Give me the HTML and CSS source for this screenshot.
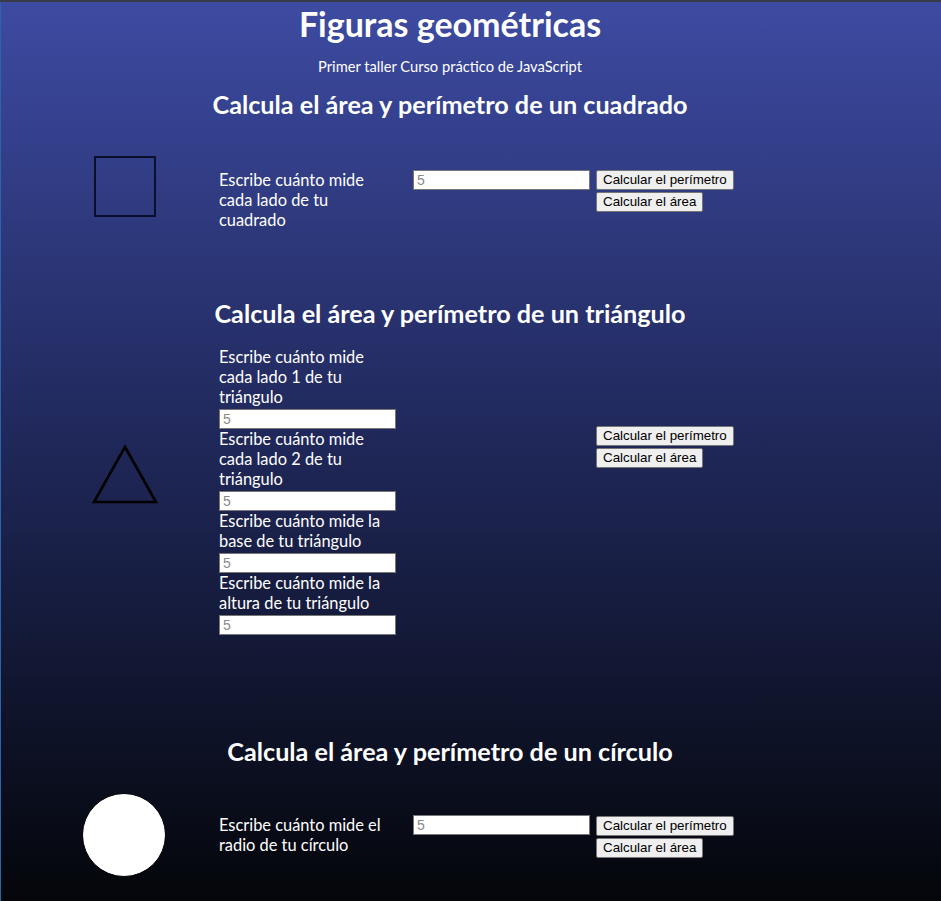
FILE: index.html
```html
<!DOCTYPE html>
<html lang="es">
<head>
<meta charset="utf-8">
<title>Figuras geométricas</title>
<link rel="stylesheet" href="styles.css">
</head>
<body>
<main class="page">
  <header class="hero">
    <h1 class="hero-title">Figuras geométricas</h1>
    <p class="hero-sub">Primer taller Curso práctico de JavaScript</p>
  </header>

  <section class="figure figure--square">
    <h2 class="figure-title">Calcula el área y perímetro de un cuadrado</h2>
    <div class="figure-row">
      <div class="shape-cell"><div class="shape-square"></div></div>
      <label class="field-label" for="inputCuadrado">Escribe cuánto mide cada lado de tu cuadrado</label>
      <input class="field-input" id="inputCuadrado" type="number" placeholder="5">
      <div class="actions">
        <button class="btn" type="button">Calcular el perímetro</button>
        <button class="btn" type="button">Calcular el área</button>
      </div>
    </div>
  </section>

  <section class="figure figure--triangle">
    <h2 class="figure-title">Calcula el área y perímetro de un triángulo</h2>
    <div class="figure-row">
      <div class="shape-cell">
        <svg class="shape-triangle" width="68" height="62" viewBox="0 0 68 62" aria-hidden="true">
          <polygon points="34,3 65,58 3,58" fill="none" stroke="#000" stroke-width="2.6" stroke-linejoin="miter"/>
        </svg>
      </div>
      <div class="field-stack">
        <label class="field-label" for="lado1">Escribe cuánto mide cada lado 1 de tu triángulo</label>
        <input class="field-input" id="lado1" type="number" placeholder="5">
        <label class="field-label" for="lado2">Escribe cuánto mide cada lado 2 de tu triángulo</label>
        <input class="field-input" id="lado2" type="number" placeholder="5">
        <label class="field-label" for="base">Escribe cuánto mide la base de tu triángulo</label>
        <input class="field-input" id="base" type="number" placeholder="5">
        <label class="field-label" for="altura">Escribe cuánto mide la altura de tu triángulo</label>
        <input class="field-input" id="altura" type="number" placeholder="5">
      </div>
      <div class="actions">
        <button class="btn" type="button">Calcular el perímetro</button>
        <button class="btn" type="button">Calcular el área</button>
      </div>
    </div>
  </section>

  <section class="figure figure--circle">
    <h2 class="figure-title">Calcula el área y perímetro de un círculo</h2>
    <div class="figure-row">
      <div class="shape-cell"><div class="shape-circle"></div></div>
      <label class="field-label" for="radio">Escribe cuánto mide el radio de tu círculo</label>
      <input class="field-input" id="radio" type="number" placeholder="5">
      <div class="actions">
        <button class="btn" type="button">Calcular el perímetro</button>
        <button class="btn" type="button">Calcular el área</button>
      </div>
    </div>
  </section>
</main>
</body>
</html>
```

FILE: styles.css
```css
html, body {
  margin: 0;
  padding: 0;
}

body {
  min-height: 901px;
  box-sizing: border-box;
  background: linear-gradient(180deg, #3d4ba2 0%, #1f2758 50%, #04060a 100%);
  border-top: 2px solid #3a3b4a;
  box-shadow: inset 1px 0 0 #2b63ad;
  color: #ffffff;
  font-family: "Lato", "Open Sans", sans-serif;
}

.page {
  width: 900px;
}

.hero {
  text-align: center;
}

.hero-title {
  margin: 2px 0 0;
  font-size: 34px;
  line-height: 40px;
  font-weight: 700;
}

.hero-sub {
  margin: 12px 0 0;
  font-size: 14.7px;
  line-height: 20px;
}

.figure-title {
  margin: 0;
  text-align: center;
  font-size: 25.2px;
  line-height: 30px;
  font-weight: 700;
}

.figure--square .figure-title { margin-top: 13px; }
.figure--triangle { margin-top: 68px; }
.figure--circle { margin-top: 101px; }

.figure-row {
  display: grid;
  grid-template-columns: 219px 194px 183px auto;
  align-items: start;
}

.figure--square .figure-row { margin-top: 37px; }
.figure--triangle .figure-row { margin-top: 19px; }
.figure--circle .figure-row { margin-top: 27px; }

.shape-cell {
  display: flex;
}

.shape-square {
  width: 62px;
  height: 61px;
  box-sizing: border-box;
  margin-left: 94px;
  border: 2px solid #0c0f2c;
}

.shape-triangle {
  display: block;
  margin-left: 91px;
  margin-top: 97px;
}

.shape-circle {
  width: 84px;
  height: 84px;
  box-sizing: border-box;
  margin-left: 82px;
  border-radius: 50%;
  background: #ffffff;
  border: 1px solid #000000;
}

.field-label {
  display: block;
  width: 172px;
  font-size: 16.4px;
  line-height: 20px;
}

.figure--square .field-label,
.figure--square .field-input,
.figure--square .actions { margin-top: 14px; }

.figure--circle .field-label,
.figure--circle .field-input { margin-top: 22px; }
.figure--circle .actions { margin-top: 23px; }

.field-stack {
  display: flex;
  flex-direction: column;
  grid-column: 2 / 4;
}

.field-stack .field-input {
  margin-top: 2px;
}

.figure--triangle .actions {
  grid-column: 4;
  margin-top: 79px;
}

.field-input {
  display: block;
  width: 177px;
  height: 20px;
  box-sizing: border-box;
  margin: 0;
  padding: 0 3px;
  border: 1px solid #767676;
  background: #ffffff;
  font-family: "Liberation Sans", Arial, sans-serif;
  font-size: 14px;
  color: #000;
  -moz-appearance: textfield;
}

.field-input::-webkit-outer-spin-button,
.field-input::-webkit-inner-spin-button {
  -webkit-appearance: none;
  margin: 0;
}

.field-input::placeholder {
  color: #8a8a8a;
}

.actions {
  display: flex;
  flex-direction: column;
  align-items: flex-start;
  gap: 2px;
}

.btn {
  height: 20px;
  box-sizing: border-box;
  margin: 0;
  padding: 0 6px;
  border: 1px solid #767676;
  border-radius: 2px;
  background: #efefef;
  color: #000;
  font-family: "Liberation Sans", Arial, sans-serif;
  font-size: 13.33px;
  line-height: 18px;
}
```
